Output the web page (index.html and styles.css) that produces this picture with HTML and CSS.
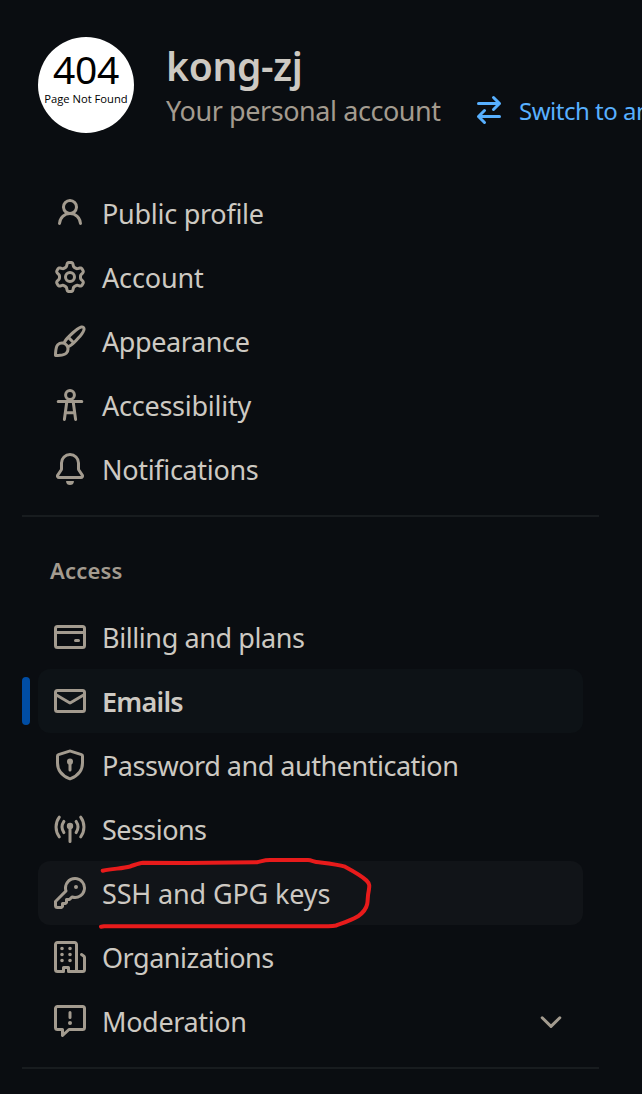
FILE: index.html
```html
<!DOCTYPE html>
<html lang="en">
<head>
<meta charset="utf-8">
<title>Settings</title>
<link rel="stylesheet" href="styles.css">
</head>
<body>
<header class="profile">
  <div class="avatar"><span class="avatar-code">404</span><span class="avatar-note">Page Not Found</span></div>
  <div class="identity">
    <h1 class="name">kong-zj</h1>
    <div class="subline">
      <span class="kind">Your personal account</span>
      <svg class="icon switch-icon" viewBox="0 0 16 16"><path class="line" d="M2.75 4.75h10.500M10.250 1.750l3 3-3 3M13.250 11.250H2.750M5.750 8.250l-3 3 3 3"/></svg>
      <a class="switch">Switch to another account</a>
    </div>
  </div>
</header>
<nav class="menu">
  <ul class="list">
    <li class="item"><svg class="icon" viewBox="0 0 16 16"><path d="M10.561 8.073a6.005 6.005 0 0 1 3.432 5.142.75.75 0 1 1-1.498.07 4.5 4.5 0 0 0-8.99 0 .75.75 0 0 1-1.498-.07 6.004 6.004 0 0 1 3.431-5.142 3.999 3.999 0 1 1 5.123 0ZM10.5 5a2.5 2.5 0 1 0-5 0 2.5 2.5 0 0 0 5 0Z"/></svg><span class="label l-profile">Public profile</span></li>
    <li class="item"><svg class="icon" viewBox="0 0 16 16"><path d="M8 0a8.2 8.2 0 0 1 .701.031C9.444.095 9.99.645 10.16 1.29l.288 1.107c.018.066.079.158.212.224.231.114.454.243.668.386.123.082.233.09.299.071l1.103-.303c.644-.176 1.392.021 1.82.63.27.385.506.792.704 1.218.315.675.111 1.422-.364 1.891l-.814.806c-.049.048-.098.147-.088.294.016.257.016.515 0 .772-.01.147.038.246.088.294l.814.806c.475.469.679 1.216.364 1.891a7.977 7.977 0 0 1-.704 1.217c-.428.61-1.176.807-1.82.63l-1.102-.302c-.067-.019-.177-.011-.3.071a5.909 5.909 0 0 1-.668.386c-.133.066-.194.158-.211.224l-.29 1.106c-.168.646-.715 1.196-1.458 1.26a8.006 8.006 0 0 1-1.402 0c-.743-.064-1.289-.614-1.458-1.26l-.289-1.106c-.018-.066-.079-.158-.212-.224a5.738 5.738 0 0 1-.668-.386c-.123-.082-.233-.09-.299-.071l-1.103.303c-.644.176-1.392-.021-1.82-.63a8.12 8.12 0 0 1-.704-1.218c-.315-.675-.111-1.422.363-1.891l.815-.806c.05-.048.098-.147.088-.294a6.214 6.214 0 0 1 0-.772c.01-.147-.038-.246-.088-.294l-.815-.806C.635 6.045.431 5.298.746 4.623a7.92 7.92 0 0 1 .704-1.217c.428-.61 1.176-.807 1.82-.63l1.102.302c.067.019.177.011.3-.071.214-.143.437-.272.668-.386.133-.066.194-.158.211-.224l.29-1.106C6.009.645 6.556.095 7.299.03 7.53.01 7.764 0 8 0Zm-.571 1.525c-.036.003-.108.036-.137.146l-.289 1.105c-.147.561-.549.967-.998 1.189-.173.086-.34.183-.5.29-.417.278-.97.423-1.529.27l-1.103-.303c-.109-.03-.175.016-.195.045-.22.312-.412.644-.573.99-.014.031-.021.11.059.19l.815.806c.411.406.562.957.53 1.456a4.709 4.709 0 0 0 0 .582c.032.499-.119 1.05-.53 1.456l-.815.806c-.081.08-.073.159-.059.19.162.346.353.677.573.989.02.03.085.076.195.046l1.102-.303c.56-.153 1.113-.008 1.53.27.161.107.328.204.501.29.447.222.85.629.997 1.189l.289 1.105c.029.109.101.143.137.146a6.6 6.6 0 0 0 1.142 0c.036-.003.108-.036.137-.146l.289-1.105c.147-.561.549-.967.998-1.189.173-.086.34-.183.5-.29.417-.278.97-.423 1.529-.27l1.103.303c.109.029.175-.016.195-.045.22-.313.411-.644.573-.99.014-.031.021-.11-.059-.19l-.815-.806c-.411-.406-.562-.957-.53-1.456a4.709 4.709 0 0 0 0-.582c-.032-.499.119-1.05.53-1.456l.815-.806c.081-.08.073-.159.059-.19a6.464 6.464 0 0 0-.573-.989c-.02-.03-.085-.076-.195-.046l-1.102.303c-.56.153-1.113.008-1.53-.27a4.44 4.44 0 0 0-.501-.29c-.447-.222-.85-.629-.997-1.189l-.289-1.105c-.029-.11-.101-.143-.137-.146a6.6 6.6 0 0 0-1.142 0ZM11 8a3 3 0 1 1-6 0 3 3 0 0 1 6 0ZM9.5 8a1.5 1.5 0 1 0-3.001.001A1.5 1.5 0 0 0 9.5 8Z"/></svg><span class="label l-account">Account</span></li>
    <li class="item"><svg class="icon" viewBox="0 0 16 16"><path d="M11.134 1.535c.7-.509 1.416-.942 2.076-1.155.649-.21 1.463-.267 2.069.34.603.601.568 1.411.368 2.07-.202.668-.624 1.39-1.125 2.096-1.011 1.424-2.496 2.987-3.775 4.249-1.098 1.084-2.132 1.839-3.04 2.3a3.744 3.744 0 0 1-1.055 3.217c-.431.431-1.065.691-1.657.861-.614.177-1.294.287-1.914.357A21.151 21.151 0 0 1 .797 16H.743l.007-.75H.749L.742 16a.75.75 0 0 1-.743-.742l.743-.008-.742.007v-.054a21.25 21.25 0 0 1 .13-2.284c.067-.647.187-1.287.358-1.914.17-.591.43-1.226.86-1.657a3.746 3.746 0 0 1 3.227-1.054c.466-.893 1.225-1.907 2.314-2.982 1.271-1.255 2.833-2.75 4.246-3.777ZM1.62 13.089c-.051.464-.086.929-.104 1.395.466-.018.932-.053 1.396-.104a10.511 10.511 0 0 0 1.668-.309c.526-.151.856-.325 1.011-.48a2.25 2.25 0 1 0-3.182-3.182c-.155.155-.329.485-.48 1.01a10.515 10.515 0 0 0-.309 1.67Zm10.396-10.34c-1.224.89-2.605 2.189-3.822 3.384l1.718 1.718c1.21-1.205 2.51-2.597 3.387-3.833.47-.662.78-1.227.912-1.662.134-.444.032-.551.009-.575h-.001V1.78c-.014-.014-.113-.113-.548.027-.432.14-.995.462-1.655.942Zm-4.832 7.266-.001.001a9.859 9.859 0 0 0 1.63-1.142L7.155 7.216a9.7 9.7 0 0 0-1.161 1.607c.482.302.889.71 1.19 1.192Z"/></svg><span class="label l-appearance">Appearance</span></li>
    <li class="item"><svg class="icon" viewBox="0 0 16 16"><path class="line" d="M2.100 6.250h11.800M6.400 6.400 5.200 15.200M9.600 6.400l1.200 8.800M5.600 11.900h4.800"/><circle class="line" cx="8" cy="3" r="2.200"/></svg><span class="label l-accessibility">Accessibility</span></li>
    <li class="item"><svg class="icon" viewBox="0 0 16 16"><path d="M8 16a2 2 0 0 0 1.985-1.75c.017-.137-.097-.25-.235-.25h-3.5c-.138 0-.252.113-.235.25A2 2 0 0 0 8 16ZM3 5a5 5 0 0 1 10 0v2.947c0 .05.015.098.042.139l1.703 2.555A1.519 1.519 0 0 1 13.482 13H2.518a1.516 1.516 0 0 1-1.263-2.36l1.703-2.554A.255.255 0 0 0 3 7.947Zm5-3.5A3.5 3.5 0 0 0 4.5 5v2.947c0 .346-.102.683-.294.97l-1.703 2.556a.017.017 0 0 0-.003.01l.001.006c0 .002.002.004.004.006l.006.004.007.001h10.964l.007-.001.006-.004.004-.006.001-.007a.017.017 0 0 0-.003-.01l-1.703-2.554a1.745 1.745 0 0 1-.294-.97V5A3.5 3.5 0 0 0 8 1.5Z"/></svg><span class="label l-notifications">Notifications</span></li>
  </ul>
  <h2 class="heading">Access</h2>
  <ul class="list">
    <li class="item"><svg class="icon" viewBox="0 0 16 16"><rect class="line" x=".75" y="2.75" width="14.5" height="10.5" rx="1"/><path class="line" d="M1 5.75h14M10.75 9.75h1.5"/></svg><span class="label l-billing">Billing and plans</span></li>
    <li class="item current"><svg class="icon" viewBox="0 0 16 16"><rect class="line" x=".75" y="2.75" width="14.5" height="10.5" rx="1"/><path class="line" d="m1 4.900 6.750 4q.25.15.5 0L15 4.900"/></svg><span class="label l-emails">Emails</span></li>
    <li class="item"><svg class="icon" viewBox="0 0 16 16"><path class="line" d="M7.750 1.050 2.250 2.800a.7.7 0 0 0-.5.67V7c0 3.600 2 6.200 5.950 7.850q.3.12.6 0C12.250 13.200 14.250 10.600 14.250 7V3.470a.7.7 0 0 0-.5-.67l-5.500-1.750q-.25-.08-.5 0ZM8 7v3.500"/><circle cx="8" cy="6.300" r="1.500"/></svg><span class="label l-password">Password and authentication</span></li>
    <li class="item"><svg class="icon" viewBox="0 0 16 16"><path class="line" d="M8 7v7.250M2.650 2.100a8.200 8.200 0 0 0 0 9.800M13.350 2.100a8.200 8.200 0 0 1 0 9.800M4.950 4.200a5 5 0 0 0 0 5.600M11.050 4.200a5 5 0 0 1 0 5.600"/><circle cx="8" cy="6.500" r="1.600"/></svg><span class="label l-sessions">Sessions</span></li>
    <li class="item hovered"><svg class="icon" viewBox="0 0 16 16"><path d="M10.5 0a5.499 5.499 0 1 1-1.288 10.848l-.932.932a.749.749 0 0 1-.53.22H7v.75a.749.749 0 0 1-.22.53l-.5.5a.749.749 0 0 1-.53.22H5v.75a.749.749 0 0 1-.22.53l-.5.5a.749.749 0 0 1-.53.22h-2A1.75 1.75 0 0 1 0 14.25v-2c0-.199.079-.389.22-.53l4.932-4.932A5.5 5.5 0 0 1 10.5 0Zm-4 5.5c-.001.431.069.86.205 1.269a.75.75 0 0 1-.181.768L1.5 12.56v1.69c0 .138.112.25.25.25h1.69l.06-.06v-1.19a.75.75 0 0 1 .75-.75h1.19l.06-.06v-1.19a.75.75 0 0 1 .75-.75h1.19l1.023-1.025a.75.75 0 0 1 .768-.18A4 4 0 1 0 6.5 5.5ZM11 6a1 1 0 1 1 0-2 1 1 0 0 1 0 2Z"/></svg><span class="label l-keys">SSH and GPG keys</span>
      <svg class="marking" viewBox="0 0 280 76"><path d="M6.700 15.700C18 13.500 27 13.500 34 11.500 40 9.500 43 8 47 7.700L91 8 161 7.200C165 6.500 168 5 174 5H212C216 5.200 218 7 223 7.300 233 8.500 242 9.500 249 11.700 257 16 266 21 270.500 25.500 274 29 273.500 31 272.700 36 271.500 41 272 45 271.200 49 270 55 266 58.500 262 61.300 254 66 247 68 240 70.500 237 71.300 234 71.200 231 71.200H8L5 71.700"/></svg>
    </li>
    <li class="item"><svg class="icon" viewBox="0 0 16 16"><path d="M1.75 16A1.75 1.75 0 0 1 0 14.25V1.75C0 .784.784 0 1.75 0h8.5C11.216 0 12 .784 12 1.75v12.5c0 .085-.006.168-.018.25h2.268a.25.25 0 0 0 .25-.25V8.285a.25.25 0 0 0-.111-.208l-1.055-.703a.749.749 0 1 1 .832-1.248l1.055.703c.487.325.779.871.779 1.456v5.965A1.75 1.75 0 0 1 14.25 16h-3.5a.766.766 0 0 1-.197-.026c-.099.017-.2.026-.303.026h-3a.75.75 0 0 1-.75-.75V14h-1v1.25a.75.75 0 0 1-.75.75Zm-.25-1.75c0 .138.112.25.25.25H4v-1.250a.75.75 0 0 1 .75-.75h2.500a.75.75 0 0 1 .75.75v1.250h2.250a.25.25 0 0 0 .25-.25V1.750a.25.25 0 0 0-.25-.25h-8.500a.25.25 0 0 0-.25.25Z"/><path class="dots" d="M4 3.750h.01M8 3.750h.01M4 6.750h.01M8 6.750h.01M4 9.750h.01M8 9.750h.01"/></svg><span class="label l-orgs">Organizations</span></li>
    <li class="item"><svg class="icon" viewBox="0 0 16 16"><path class="line" d="M1.750.75h12.500a1 1 0 0 1 1 1v9.500a1 1 0 0 1-1 1H7.500L4.250 15.250v-3H1.750a1 1 0 0 1-1-1v-9.500a1 1 0 0 1 1-1ZM8 3.750v2.500"/><circle cx="8" cy="9" r="1"/></svg><span class="label l-moderation">Moderation</span><svg class="icon chevron" viewBox="0 0 16 16"><path class="line" d="M3.600 6.400 8 10.700l4.400-4.300"/></svg></li>
  </ul>
</nav>
</body>
</html>
```
FILE: styles.css
```css
* { box-sizing: border-box; }
html { height: 1094px; overflow: hidden; background: #0a0d11; }
body {
  margin: 0;
  width: 642px;
  height: 1094px;
  overflow: hidden;
  background: #0a0d11;
  color: #cdc9c2;
  font-family: "Noto Sans", "Open Sans", sans-serif;
}
h1, h2, ul { margin: 0; padding: 0; }
.profile { display: flex; height: 181px; padding: 37px 0 0 38px; gap: 32px; overflow: hidden; }
.avatar {
  flex: none;
  display: flex;
  flex-direction: column;
  align-items: center;
  width: 96px;
  height: 96px;
  padding-top: 8px;
  border-radius: 50%;
  background: #fff;
  color: #000;
}
.avatar-code { font-size: 39px; line-height: 48px; letter-spacing: -0.3px; }
.avatar-note { font-family: "Open Sans", sans-serif; font-size: 11.2px; line-height: 12px; white-space: nowrap; }
.identity { flex: none; padding-top: 5px; }
.name { font-size: 39px; line-height: 48px; font-weight: 600; letter-spacing: -0.3px; }
.subline { display: flex; align-items: center; height: 40px; white-space: nowrap; }
.kind { width: 307px; font-size: 27px; color: #a39b8f; letter-spacing: -0.43px; }
.switch { color: #58b0ff; margin-left: 14px; font-size: 24px; letter-spacing: -0.5px; }
.icon { flex: none; width: 32px; height: 32px; fill: currentColor; color: #a39b8f; }
.switch-icon { color: #58b0ff; }
.line { fill: none; stroke: currentColor; stroke-width: 1.5; stroke-linecap: round; stroke-linejoin: round; }
.dots { fill: none; stroke: currentColor; stroke-width: 1.8; stroke-linecap: round; }
.menu { width: 599px; padding-left: 22px; }
.list { list-style: none; padding: 0 16px 14px; border-bottom: 2px solid #181c1f; }
.item { position: relative; display: flex; align-items: center; height: 64px; padding: 0 16px; border-radius: 12px; }
.label { margin-left: 16px; padding-top: 2px; font-size: 27px; line-height: 38px; white-space: nowrap; }
.l-profile { letter-spacing: -0.27px; }
.l-account { letter-spacing: -0.15px; }
.l-appearance { letter-spacing: -0.4px; }
.l-accessibility { letter-spacing: -0.25px; }
.l-notifications { letter-spacing: -0.32px; }
.l-billing { letter-spacing: -0.41px; }
.l-emails { letter-spacing: -0.75px; }
.l-password { letter-spacing: -0.48px; }
.l-sessions { letter-spacing: -0.55px; }
.l-keys { letter-spacing: -0.15px; }
.l-orgs { letter-spacing: -0.47px; }
.l-moderation { letter-spacing: -0.35px; }
.heading { height: 88px; padding: 35px 0 0 28px; font-size: 22px; line-height: 36px; font-weight: 600; letter-spacing: 0.2px; color: #a39b8f; }
.current { background: #0d1216; }
.current .label { font-weight: 600; }
.current::before { content: ""; position: absolute; left: -16px; top: 8px; width: 8px; height: 48px; border-radius: 4px; background: #004da4; }
.hovered { background: #111418; }
.marking { position: absolute; left: 58px; top: -6px; width: 280px; height: 76px; fill: none; stroke: #e81b1b; stroke-width: 4; stroke-linecap: round; stroke-linejoin: round; overflow: visible; }
.chevron { margin-left: auto; }
```
